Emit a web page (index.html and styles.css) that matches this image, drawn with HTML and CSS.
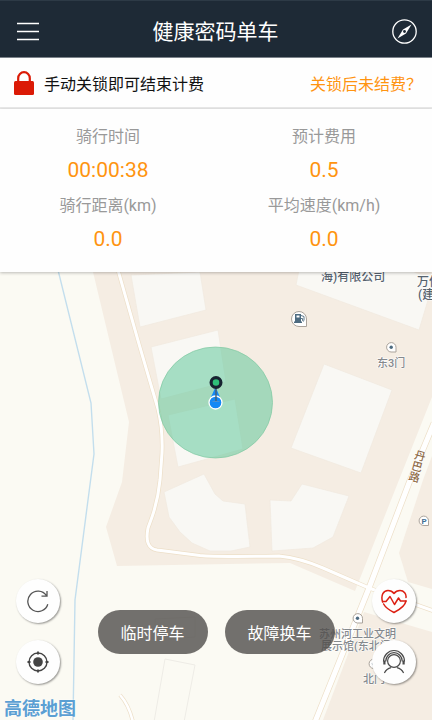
FILE: index.html
```html
<!DOCTYPE html>
<html lang="zh-CN">
<head>
  <meta charset="UTF-8" />
  <meta name="viewport" content="width=device-width, initial-scale=1.0"/>
  <title>健康密码单车</title>
  <link rel="stylesheet" href="styles.css">
</head>
<body>
  <header class="header">
    <button type="button" class="icon-btn" aria-label="菜单">
      <svg width="24" height="26" viewBox="0 0 24 26" fill="none" stroke="#fff" stroke-width="1.4">
        <path d="M2 4.500h22M2 12.500h22M2 20.500h22"/>
      </svg>
    </button>
    <h1>健康密码单车</h1>
    <button type="button" class="icon-btn" aria-label="导航">
      <svg width="26" height="26" viewBox="0 0 26 26" fill="none" stroke="#fff">
        <circle cx="12.5" cy="12.5" r="11.7" stroke-width="1.3"/>
        <path d="M19.5 5.5L14 14.5L5.5 19.5L11 10.5Z" fill="#fff" stroke="none"/>
        <circle cx="12.5" cy="12.5" r="1.4" fill="#1e2a36" stroke="none"/>
      </svg>
    </button>
  </header>

  <div class="notice">
    <svg width="20" height="26" viewBox="0 0 20 26">
      <path d="M4.2 12V8.2a5.8 6 0 0 1 11.6 0V12" fill="none" stroke="#db1a06" stroke-width="2.2"/>
      <rect x="0" y="11" width="20" height="14" rx="1.5" fill="#db1a06"/>
    </svg>
    <span class="notice-text">手动关锁即可结束计费</span>
    <a href="#">关锁后未结费？</a>
  </div>

  <dl class="stats">
    <div><dt>骑行时间</dt><dd>00:00:38</dd></div>
    <div><dt>预计费用</dt><dd>0.5</dd></div>
    <div><dt>骑行距离(km)</dt><dd>0.0</dd></div>
    <div><dt>平均速度(km/h)</dt><dd>0.0</dd></div>
  </dl>

  <main class="map">
    <svg class="map-canvas" viewBox="0 272 432 448" preserveAspectRatio="xMidYMin slice">
      <!-- blocks -->
      <g fill="#f5ede3">
        <path d="M93 272L129 422L122 482L106 527L117 566L290 563L355 591L399 480L432 397V272Z"/>
        <path d="M432 456L423 480L399 553L408 582L432 589Z"/>
        <path d="M364 612L432 632V720H323Z"/>
      </g>

      <!-- buildings -->
      <g fill="#f9f8f4" stroke="#f0e9e0" stroke-width="0.7">
        <path d="M131 275L200 272L206 310L140 327Z"/>
        <path d="M151 347L218 330L226 382L161 399Z"/>
        <path d="M168 415L235 399L243 449L178 467Z"/>
        <path d="M164 492L204 474L215 494L223 501L245 504L250 547L231 551H210L192 543L180 532L169 517Z"/>
        <path d="M270 500L291 501L302 484L349 496L333 537L313 548L272 551Z"/>
        <path d="M324 364L392 390L361 473L291 448Z"/>
        <path d="M299 270L296 285L419 330L428 300H434V270Z"/>
      </g>
      <g fill="none" stroke="#eeece6">
        <path d="M165 659L195 665L184 722M165 659L154 722"/>
        <path d="M155 619L195 617V637L155 640Z"/>
      </g>
      <path d="M414 272a12 4 0 0 0 18 2v-2z" fill="#f5ede3"/>

      <!-- river -->
      <path d="M58 270L91 403L94 454L88 500L75 600L73 720" fill="none" stroke="#c3deed" stroke-width="1.4"/>

      <!-- roads -->
      <g fill="none" stroke="#eddfc8" stroke-width="4.4">
        <path d="M118 270L139 344L158 409Q163 430 162 453L160 480Q158 500 152 517L148 528Q144 548 157 550L200 555.5Q216 557 279 556Q300 558 323 568L369 588L434 611"/>
        <path d="M120 695Q129 705 133 722" stroke-width="4"/>
        <path d="M434 423L409 483L369 588L315 722" stroke-width="6.4"/>
      </g>
      <g fill="none" stroke="#fff" stroke-width="3">
        <path d="M118 270L139 344L158 409Q163 430 162 453L160 480Q158 500 152 517L148 528Q144 548 157 550L200 555.5Q216 557 279 556Q300 558 323 568L369 588L434 611"/>
        <path d="M120 695Q129 705 133 722" stroke-width="2.6"/>
        <path d="M434 423L409 483L369 588L315 722" stroke-width="5"/>
      </g>

      <!-- places -->
      <g fill="#fff" stroke="#aaa39b">
        <path d="M306.5 326.5H299a7.5 7.5 0 1 1 7.5-7.5Z"/>
        <path d="M396 352H391a4.7 4.7 0 1 1 5-4.7Z"/>
        <path d="M428.5 525.5H424a4.7 4.7 0 1 1 4.5-4.7Z"/>
        <path d="M362.5 623H357.5a4.7 4.7 0 1 1 5-4.7Z"/>
        <path d="M378.5 668.5H373.5a4.7 4.7 0 1 1 5-4.7Z"/>
      </g>
      <g fill="#4d6b80">
        <path d="M295 314h6v7.5h1v1.5h-8v-1.5h1zM296.5 315.5v2h3v-2z" fill-rule="evenodd"/>
        <path d="M301 315.5l3 1v4q-1 1.5-1.5 0v-2h-1.5" fill="none" stroke="#4d6b80" stroke-width="0.9"/>
        <circle cx="391.2" cy="347.3" r="1.7"/>
        <circle cx="357.5" cy="618.3" r="1.7"/>
        <circle cx="373.5" cy="663.8" r="1.7"/>
      </g>
      <text class="parking" x="421.5" y="524">P</text>
      <g class="place dark">
        <text x="321" y="281">海)有限公司</text>
        <text x="417" y="286">万信</text>
        <text x="418" y="299">(建</text>
      </g>
      <g class="place">
        <text x="377" y="367">东3门</text>
        <text x="319" y="638">苏州河工业文明</text>
        <text x="321" y="650">展示馆(东北门)</text>
        <text x="363" y="683">北门</text>
      </g>
      <text class="road-name" transform="translate(420 450) rotate(15)">丹巴路</text>

      <!-- parking range and current position -->
      <ellipse cx="215.5" cy="402.5" rx="57" ry="55.5" fill="#54c494" fill-opacity="0.5" stroke="#7fc9a2" stroke-width="0.7"/>
      <path d="M215.5 387L220 397H211Z" fill="#1388f5"/>
      <circle cx="215.5" cy="402.5" r="6.5" fill="#1388f5" stroke="#fff" stroke-width="1.3"/>
      <path d="M216 388V401" stroke="#485f70" stroke-width="1.4"/>
      <path d="M212.5 401.5h7" stroke="#4b8fd0" stroke-width="1"/>
      <circle cx="216" cy="382.5" r="4.9" fill="#2fbf79" stroke="#172331" stroke-width="3.2"/>
    </svg>

    <div class="controls">
      <div class="round-group">
        <button type="button" class="round" aria-label="刷新">
          <svg width="24" height="24" viewBox="0 0 24 24" fill="none" stroke="#555" stroke-width="1.3">
            <path d="M21.8 15.2A10.2 10.2 0 1 1 20.4 6.500M21 2V7.2H15.5"/>
          </svg>
        </button>
        <button type="button" class="round" aria-label="定位">
          <svg width="24" height="24" viewBox="0 0 24 24" fill="none" stroke="#444" stroke-width="1.4">
            <circle cx="12" cy="12" r="9"/>
            <circle cx="12" cy="12" r="4.8" fill="#444" stroke="none"/>
            <path d="M12 1.5V4.5M12 19.5V22.5M1.5 12H4.5M19.5 12H22.5" stroke-width="1.8"/>
          </svg>
        </button>
      </div>
      <div class="pill-group">
        <button type="button" class="pill">临时停车</button>
        <button type="button" class="pill">故障换车</button>
      </div>
      <div class="round-group">
        <button type="button" class="round" aria-label="健康">
          <svg width="26" height="26" viewBox="0 0 26 26" fill="none" stroke="#dc1f12" stroke-width="1.5" stroke-linejoin="round" stroke-linecap="round">
            <path d="M1.600 14C-0.500 7 2.500 2.500 7 2.500C9.500 2.500 11.500 3.500 13 5.500C14.500 3.500 16.500 2.500 19 2.500C23 2.500 25.500 6 25 9.500M2.600 16C4.500 19.500 9 22.500 13 24.500C18 22 24 18 25 13"/>
            <path d="M2 13.500H5L9 8.500L13.500 16.500L17.500 10L19.500 13H25"/>
          </svg>
        </button>
        <button type="button" class="round" aria-label="客服">
          <svg width="26" height="26" viewBox="0 0 26 26" fill="none" stroke="#4a4a4a" stroke-width="1.2">
            <circle cx="13" cy="12" r="6.4"/>
            <path d="M2.5 12.5A10.5 11 0 0 1 23.5 12.5M4.7 12.5A8.3 8.8 0 0 1 21.3 12.5M3.4 24Q5.5 19.5 10 18.6M22.6 24Q20.5 19.5 16 18.6"/>
            <path d="M3.4 11.5V15.5M22.6 11.5V15.5" stroke-width="2.2"/>
          </svg>
        </button>
      </div>
    </div>

    <span class="map-logo">高德地图</span>
  </main>
</body>
</html>
```
FILE: styles.css
```css
* {
  box-sizing: border-box;
}

body {
  margin: 0;
  min-height: 100vh;
  display: flex;
  flex-direction: column;
  font-family: Roboto, "Noto Sans CJK SC", sans-serif;
  font-size: 16px;
  background: #fbfaf3;
  color: #111;
}

button {
  border: none;
  padding: 0;
  font-family: inherit;
  cursor: pointer;
}

svg {
  display: block;
}

.header {
  height: 58px;
  padding: 5px 14px 0 15px;
  display: flex;
  align-items: center;
  justify-content: space-between;
  background: #1e2a36;
  border-top: 1px solid #2d3a46;
  border-bottom: 1px solid #7b828a;
}

.header h1 {
  margin: 0;
  font-size: 21px;
  line-height: 30px;
  font-weight: 400;
  color: #fff;
}

.icon-btn {
  background: none;
}

.notice {
  height: 51px;
  padding: 0 10px 0 14px;
  display: flex;
  align-items: center;
  gap: 10px;
  background: #fefefe;
  border-bottom: 2px solid #e9e9e9;
}

.notice-text {
  flex: 1;
}

.notice a {
  color: #ff9410;
  text-decoration: none;
}

.stats {
  position: relative;
  z-index: 1;
  margin: 0;
  padding: 16px 0 11px;
  display: grid;
  grid-template-columns: 1fr 1fr;
  row-gap: 2px;
  text-align: center;
  background: #fefefe;
  box-shadow: 0 1px 3px rgba(0,0,0,0.25);
}

.stats dt {
  line-height: 24px;
  color: #999;
}

.stats dd {
  margin: 0;
  font-size: 21px;
  line-height: 43px;
  color: #ff9410;
}

.map {
  position: relative;
  flex: 1;
  min-height: 240px;
  display: flex;
  flex-direction: column;
  justify-content: flex-end;
  overflow: hidden;
}

/* map lies under the buttons */
.map-canvas {
  position: absolute;
  top: 0;
  left: 0;
  width: 100%;
  height: 100%;
}

.place {
  font-size: 11px;
  font-weight: 500;
  fill: #85898d;
  stroke: #fff;
  stroke-width: 1px;
  paint-order: stroke;
}

.place.dark {
  font-size: 12px;
  fill: #56626e;
}

.road-name {
  font-size: 11px;
  font-weight: 500;
  fill: #8f6c48;
  stroke: #fff;
  stroke-width: 1px;
  paint-order: stroke;
  writing-mode: vertical-rl;
}

.parking {
  font-size: 8px;
  font-weight: 700;
  fill: #3f6f93;
}

.controls {
  position: relative;
  padding: 0 16px;
  display: flex;
  align-items: center;
  justify-content: space-between;
}

.round-group {
  display: flex;
  flex-direction: column;
  gap: 17px;
}

.round {
  width: 44px;
  height: 44px;
  display: flex;
  align-items: center;
  justify-content: center;
  border-radius: 50%;
  background: #fefefe;
  box-shadow: 1px 1px 2px rgba(0,0,0,0.4);
}

.pill-group {
  display: flex;
  gap: 17px;
}

.pill {
  width: 110px;
  height: 44px;
  border-radius: 22px;
  background: rgba(80,78,75,0.8);
  font-size: 16px;
  color: #fff;
}

.map-logo {
  position: relative;
  height: 36px;
  padding: 13px 0 0 4px;
  font-size: 18px;
  line-height: 24px;
  font-weight: 700;
  color: #5b9fd3;
  text-shadow: 0 0 2px #fff;
}
```
